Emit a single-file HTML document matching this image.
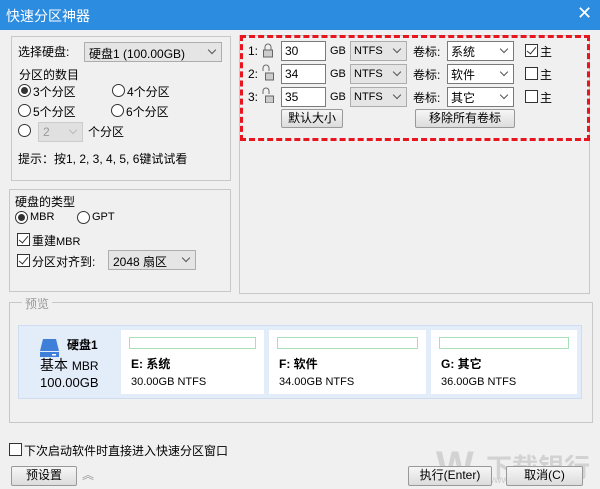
<!DOCTYPE html><html><head><meta charset="utf-8"><style>
*{box-sizing:border-box;margin:0;padding:0}
body{width:600px;height:489px;background:#f0f0f0;font-family:"Liberation Sans","Noto Sans CJK SC",sans-serif;font-size:12px;color:#000;position:relative;overflow:hidden}
.a{position:absolute;white-space:nowrap}
.box{position:absolute;border:1px solid #c8c8c8}
.cb{position:absolute;background:#e5e5e5;border:1px solid #adadad}
.cbw{position:absolute;background:#fff;border:1px solid #7a7a7a}
.chev{position:absolute;right:6px;top:4px;width:6px;height:6px;border-right:1px solid #555;border-bottom:1px solid #555;transform:rotate(45deg)}
.rad{position:absolute;width:13px;height:13px;border:1px solid #333;border-radius:50%;background:#fff}
.rad.on::after{content:"";position:absolute;left:2px;top:2px;width:7px;height:7px;border-radius:50%;background:#333}
.chk{position:absolute;width:13px;height:13px;border:1px solid #333;background:#fff}
.chk.on::after{content:"";position:absolute;left:3px;top:0px;width:4px;height:8px;border-right:1.5px solid #333;border-bottom:1.5px solid #333;transform:rotate(40deg)}
.btn{position:absolute;border:1px solid #999;background:linear-gradient(#f6f6f6,#dcdcdc);border-radius:2px;text-align:center;line-height:17px}
.inp{position:absolute;background:#fff;border:1px solid #7a7a7a;padding-left:3px;line-height:18px}
.part{position:absolute;background:#fff;top:330px;height:64px}
.bar{position:absolute;left:8px;right:8px;top:7px;height:12px;border:1px solid #a8e0b8}
</style></head><body>
<div class="a" style="left:0;top:0;width:600px;height:30px;background:#2b8ce0"></div>
<div class="a" style="left:6px;top:6px;color:#fff;font-size:14px">快速分区神器</div>
<div class="a" style="left:577px;top:3px;color:#fff;font-size:18px">✕</div>

<div class="box" style="left:11px;top:36px;width:220px;height:145px"></div>
<div class="a" style="left:18px;top:43px">选择硬盘:</div>
<div class="cb" style="left:84px;top:42px;width:138px;height:20px;padding:2px 4px">硬盘1 (100.00GB)<div class="chev"></div></div>
<div class="a" style="left:19px;top:66px">分区的数目</div>
<div class="rad on" style="left:18px;top:84px"></div><div class="a" style="left:33px;top:83px">3个分区</div>
<div class="rad" style="left:112px;top:84px"></div><div class="a" style="left:127px;top:83px">4个分区</div>
<div class="rad" style="left:18px;top:104px"></div><div class="a" style="left:33px;top:103px">5个分区</div>
<div class="rad" style="left:111px;top:104px"></div><div class="a" style="left:126px;top:103px">6个分区</div>
<div class="rad" style="left:18px;top:124px"></div>
<div class="cb" style="left:38px;top:122px;width:45px;height:20px;padding:2px 4px;color:#999;background:#e0e0e0;border-color:#ccc">2<div class="chev" style="border-color:#bbb"></div></div>
<div class="a" style="left:88px;top:123px">个分区</div>
<div class="a" style="left:18px;top:150px">提示：按1, 2, 3, 4, 5, 6键试试看</div>

<div class="box" style="left:9px;top:189px;width:222px;height:103px"></div>
<div class="a" style="left:15px;top:193px">硬盘的类型</div>
<div class="rad on" style="left:15px;top:211px"></div><div class="a" style="left:30px;top:211px;font-size:11px">MBR</div>
<div class="rad" style="left:77px;top:211px"></div><div class="a" style="left:92px;top:211px;font-size:11px">GPT</div>
<div class="chk on" style="left:17px;top:233px"></div><div class="a" style="left:32px;top:232px">重建<span style="font-size:11px">MBR</span></div>
<div class="chk on" style="left:17px;top:254px"></div><div class="a" style="left:32px;top:253px">分区对齐到:</div>
<div class="cb" style="left:108px;top:250px;width:88px;height:20px;padding:2px 4px">2048 扇区<div class="chev"></div></div>

<div class="box" style="left:239px;top:35px;width:351px;height:259px"></div>
<div class="a" style="left:240px;top:35px;width:350px;height:106px;border:3px dashed #e8141e"></div>
<div class="a" style="left:248px;top:44px">1:</div><div class="a" style="left:248px;top:67px">2:</div><div class="a" style="left:248px;top:90px">3:</div>
<svg class="a" style="left:262px;top:43px" width="12" height="60" viewBox="0 0 12 60" fill="none" stroke="#666">
<path d="M3 7V4a3 3 0 0 1 6 0v3"/><rect x="1.5" y="7" width="9" height="7" fill="#ccc"/>
<path d="M1 28V25a3 3 0 0 1 6 0v3"/><rect x="3.5" y="30" width="8" height="7" fill="#ccc"/>
<path d="M1 51V48a3 3 0 0 1 6 0v3"/><rect x="3.5" y="53" width="8" height="7" fill="#ccc"/></svg>
<div class="inp" style="left:281px;top:41px;width:45px;height:20px">30</div>
<div class="inp" style="left:281px;top:64px;width:45px;height:20px">34</div>
<div class="inp" style="left:281px;top:87px;width:45px;height:20px">35</div>
<div class="a" style="left:330px;top:45px;font-size:11px">GB</div><div class="a" style="left:330px;top:68px;font-size:11px">GB</div><div class="a" style="left:330px;top:91px;font-size:11px">GB</div>
<div class="cb" style="left:350px;top:41px;width:57px;height:20px;padding:3px 3px;font-size:11px">NTFS<div class="chev"></div></div>
<div class="cb" style="left:350px;top:64px;width:57px;height:20px;padding:3px 3px;font-size:11px">NTFS<div class="chev"></div></div>
<div class="cb" style="left:350px;top:87px;width:57px;height:20px;padding:3px 3px;font-size:11px">NTFS<div class="chev"></div></div>
<div class="a" style="left:413px;top:43px">卷标:</div><div class="a" style="left:413px;top:66px">卷标:</div><div class="a" style="left:413px;top:89px">卷标:</div>
<div class="cbw" style="left:447px;top:41px;width:67px;height:20px;padding:1px 3px">系统<div class="chev"></div></div>
<div class="cbw" style="left:447px;top:64px;width:67px;height:20px;padding:1px 3px">软件<div class="chev"></div></div>
<div class="cbw" style="left:447px;top:87px;width:67px;height:20px;padding:1px 3px">其它<div class="chev"></div></div>
<div class="chk on" style="left:525px;top:44px"></div><div class="a" style="left:540px;top:43px">主</div>
<div class="chk" style="left:525px;top:67px"></div><div class="a" style="left:540px;top:66px">主</div>
<div class="chk" style="left:525px;top:90px"></div><div class="a" style="left:540px;top:89px">主</div>
<div class="btn" style="left:281px;top:109px;width:62px;height:19px">默认大小</div>
<div class="btn" style="left:415px;top:109px;width:100px;height:19px">移除所有卷标</div>

<div class="box" style="left:9px;top:302px;width:584px;height:121px"></div>
<div class="a" style="left:22px;top:295px;background:#f0f0f0;padding:0 3px;color:#999">预览</div>
<div class="a" style="left:18px;top:325px;width:564px;height:74px;background:#e3ecf9;border:1px solid #d0dcf0"></div>
<svg class="a" style="left:40px;top:339px" width="19" height="19"><path d="M3 0h13l3 12H0z" fill="#3d7fd9"/><rect x="0" y="13" width="19" height="5" fill="#3d7fd9"/><rect x="12" y="15" width="4" height="1.5" fill="#fff"/></svg>
<div class="a" style="left:67px;top:336px;font-weight:bold">硬盘1</div>
<div class="a" style="left:40px;top:355px;font-size:14px">基本 <span style="font-size:12px">MBR</span></div>
<div class="a" style="left:40px;top:375px;font-size:13px">100.00GB</div>
<div class="part" style="left:121px;width:143px"><div class="bar"></div><div class="a" style="left:10px;top:25px;font-weight:bold">E: 系统</div><div class="a" style="left:10px;top:46px;font-size:11px">30.00GB NTFS</div></div>
<div class="part" style="left:269px;width:157px"><div class="bar"></div><div class="a" style="left:10px;top:25px;font-weight:bold">F: 软件</div><div class="a" style="left:10px;top:46px;font-size:11px">34.00GB NTFS</div></div>
<div class="part" style="left:431px;width:146px"><div class="bar"></div><div class="a" style="left:10px;top:25px;font-weight:bold">G: 其它</div><div class="a" style="left:10px;top:46px;font-size:11px">36.00GB NTFS</div></div>

<div class="chk" style="left:9px;top:443px"></div><div class="a" style="left:24px;top:442px">下次启动软件时直接进入快速分区窗口</div>
<div class="a" style="left:436px;top:444px;color:#d2d2d2;font-size:40px;font-weight:bold">W</div>
<div class="a" style="left:486px;top:448px;color:#d2d2d2;font-size:26px;font-weight:bold">下载银行</div>
<div class="a" style="left:487px;top:475px;color:#ccc;font-size:10px">www.downbank.cn</div>
<div class="btn" style="left:11px;top:466px;width:66px;height:20px">预设置</div>
<div class="a" style="left:82px;top:466px;color:#999;font-size:12px">︽</div>
<div class="btn" style="left:408px;top:466px;width:84px;height:20px">执行(Enter)</div>
<div class="btn" style="left:506px;top:466px;width:77px;height:20px">取消(C)</div>
</body></html>
